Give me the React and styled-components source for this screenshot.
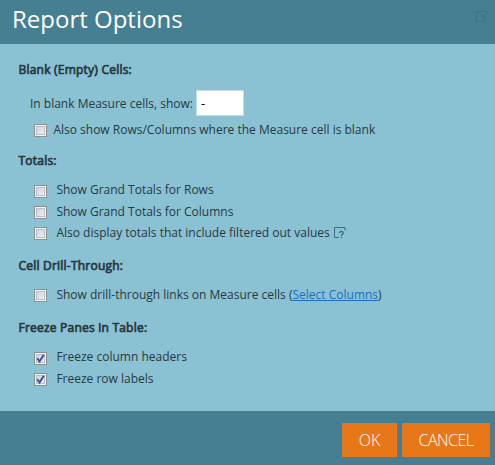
import React from "react";
import styled, { createGlobalStyle } from "styled-components";

const GlobalStyle = createGlobalStyle`
  * { box-sizing: border-box; }
  body { margin: 0; }
`;

const Dialog = styled.div`
  display: flex;
  flex-direction: column;
  width: 495px;
  height: 465px;
  background: #8ac2d4;
  color: #27393f;
  font-family: "Open Sans", sans-serif;
  font-size: 12px;
  line-height: 20px;
  white-space: nowrap;
`;

const Header = styled.header`
  display: flex;
  justify-content: space-between;
  height: 44px;
  padding: 0 6px 0 12px;
  background: #467f91;
`;

const Title = styled.h1`
  margin: 0;
  color: #fff;
  font-size: 24px;
  font-weight: 400;
  line-height: 38px;
`;

const Content = styled.main`
  flex: 1;
  padding-top: 16px;
`;

const Section = styled.section`
  margin-bottom: ${(p) => p.$gap}px;
`;

const Heading = styled.h2`
  margin: 0 0 ${(p) => p.$gap}px 18.5px;
  font-size: 12px;
  font-weight: 400;
  line-height: 20px;
  letter-spacing: 0.22px;
  -webkit-text-stroke: 0.7px #27393f;
`;

const FieldRow = styled.label`
  display: flex;
  align-items: center;
  gap: 3px;
  height: 26px;
  margin-bottom: 4px;
  padding-left: 30px;
`;

const FieldLabel = styled.span`
  padding-top: 2px;
`;

const TextField = styled.input`
  width: 48px;
  height: 26px;
  padding: 0 4px;
  border: 1px solid #c5dce8;
  background: #fff;
  color: #000;
  font: 13px "Open Sans", sans-serif;
`;

const OptionRow = styled.div`
  display: flex;
  align-items: center;
  height: 21px;
  padding-left: 34px;
`;

const OptionText = styled.span`
  margin-left: ${(p) => (p.$tight ? 6.4 : 9.4)}px;
  padding-bottom: ${(p) => p.$lift}px;
`;

const Box = styled.span`
  display: block;
  flex: none;
  width: 13px;
  height: 13px;
  border: 1px solid #8e8f8f;
  background: linear-gradient(135deg, #c8cdd6, #f6f6f6) padding-box;
  box-shadow: inset 0 0 0 1px #f4f4f4, inset 0 0 0 2px #b9bec8;

  svg { display: block; }
`;

const Link = styled.a`
  color: #1a6fc0;
  text-decoration: underline;
`;

const HelpMark = styled.svg`
  flex: none;
  width: 12px;
  height: 12px;
  margin: ${(p) => p.$margin};
  opacity: ${(p) => p.$opacity};
`;

const Footer = styled.footer`
  display: flex;
  justify-content: flex-end;
  gap: 5px;
  height: 54px;
  padding: 12px 5px 0 0;
  background: #467f91;
`;

const Button = styled.button`
  width: ${(p) => p.$width}px;
  height: 34px;
  padding: 0 0 1px;
  border: 0;
  background: #e87719;
  color: #fff;
  font: 300 16px "Open Sans", sans-serif;
  letter-spacing: ${(p) => p.$spacing || 0}px;
`;

function HelpIcon({ margin, opacity = 1 }) {
  return (
    <HelpMark viewBox="0 0 12 12" $margin={margin} $opacity={opacity} fill="none" stroke="#3b6c82">
      <path d="M5 10.5H0.5V0.5H11V3.5" strokeWidth="1" />
      <path d="M5.4 6C5.5 4.1 9.3 4 9.3 5.8C9.3 7.3 7.5 7.2 7.5 9" strokeWidth="1.3" />
      <path d="M7.5 9.8V11.2" strokeWidth="1.3" />
    </HelpMark>
  );
}

function Option({ checked, children, tight, lift = 1, after }) {
  return (
    <OptionRow>
      <Box role="checkbox" aria-checked={!!checked}>
        {checked && (
          <svg width="11" height="11" viewBox="0 0 11 11" fill="none" stroke="#3b539b" strokeWidth="2">
            <path d="M2.3 5.2L4.5 8.5L8.8 1.8" />
          </svg>
        )}
      </Box>
      <OptionText $tight={tight} $lift={lift}>{children}</OptionText>
      {after}
    </OptionRow>
  );
}

export default function App() {
  return (
    <Dialog>
      <GlobalStyle />
      <Header>
        <Title>Report Options</Title>
        <HelpIcon margin="11px 1px 0 0" opacity={0.75} />
      </Header>
      <Content>
        <Section $gap={10}>
          <Heading $gap={10}>Blank (Empty) Cells:</Heading>
          <FieldRow>
            <FieldLabel>In blank Measure cells, show:</FieldLabel>
            <TextField defaultValue="-" />
          </FieldRow>
          <Option tight>Also show Rows/Columns where the Measure cell is blank</Option>
        </Section>
        <Section $gap={12}>
          <Heading $gap={10}>Totals:</Heading>
          <Option lift={3}>Show Grand Totals for Rows</Option>
          <Option>Show Grand Totals for Columns</Option>
          <Option after={<HelpIcon margin="0 0 2px 4px" />}>Also display totals that include filtered out values</Option>
        </Section>
        <Section $gap={12}>
          <Heading $gap={9}>Cell Drill-Through:</Heading>
          <Option>Show drill-through links on Measure cells (<Link>Select Columns</Link>)</Option>
        </Section>
        <Section $gap={0}>
          <Heading $gap={10}>Freeze Panes in Table:</Heading>
          <Option checked lift={3}>Freeze column headers</Option>
          <Option checked>Freeze row labels</Option>
        </Section>
      </Content>
      <Footer>
        <Button $width={55}>OK</Button>
        <Button $width={88} $spacing={-0.5}>CANCEL</Button>
      </Footer>
    </Dialog>
  );
}
